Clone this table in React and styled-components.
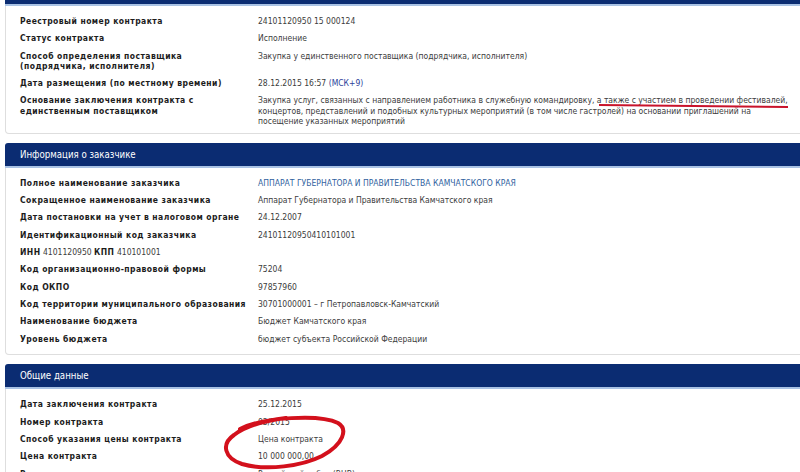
import styled, { createGlobalStyle } from "styled-components";

const GlobalStyle = createGlobalStyle`
  html, body {
    margin: 0;
    padding: 0;
    background: #fff;
    overflow: hidden;
  }
  body {
    font-family: "DejaVu Sans Condensed", "DejaVu Sans", Verdana, sans-serif;
    font-stretch: condensed;
    font-size: 8.5px;
    color: #333;
  }
`;

const Page = styled.div`
  position: relative;
  margin-top: -19px;
  padding-left: 5px;
  width: 815px;
`;

const Section = styled.section`
  margin-bottom: 9px;
`;

const SectionHeader = styled.div`
  height: 23px;
  background: #0b2c72;
  border-bottom: 2px solid #a9c2e4;
  border-radius: 3px 3px 0 0;
  color: #fff;
  font-size: 9.6px;
  display: flex;
  align-items: center;
  padding-left: 15px;
`;

const SectionBody = styled.div`
  border: 1px solid #dedede;
  border-top: none;
  border-radius: 0 0 4px 4px;
  padding: 6.5px 14px ${(p) => p.$pb || 5}px;
`;

const Row = styled.div`
  display: grid;
  grid-template-columns: 238px 1fr;
  padding: 3.5px 0;
  line-height: 10.3px;
  white-space: nowrap;
`;

const Label = styled.div`
  font-weight: bold;
  letter-spacing: 0.45px;
  color: #1c1c1c;
`;

const Value = styled.div`
  color: #3c3c3c;
`;

const Inline = styled.div`
  padding: 3.5px 0;
  line-height: 10.3px;
  color: #3c3c3c;

  b {
    color: #1c1c1c;
    letter-spacing: 0.45px;
  }
`;

const Link = styled.span`
  color: ${(p) => (p.$light ? "#2f5f9e" : "#2b3f9a")};
`;

const Underlined = styled.span`
  position: relative;

  &::after {
    content: "";
    position: absolute;
    left: 2px;
    right: 0;
    bottom: -2px;
    height: 2px;
    background: #c9132b;
    transform: rotate(0.6deg);
  }
`;

const Annotation = styled.svg`
  position: absolute;
  left: 222px;
  top: 433px;
  width: 124px;
  height: 58px;
  overflow: visible;
  pointer-events: none;
`;

const first = [
  ["Реестровый номер контракта", "24101120950 15 000124"],
  ["Статус контракта", "Исполнение"],
  [
    <>
      Способ определения поставщика
      <br />
      (подрядчика, исполнителя)
    </>,
    "Закупка у единственного поставщика (подрядчика, исполнителя)",
  ],
  [
    "Дата размещения (по местному времени)",
    <>
      28.12.2015 16:57 <Link>(МСК+9)</Link>
    </>,
  ],
  [
    <>
      Основание заключения контракта с
      <br />
      единственным поставщиком
    </>,
    <>
      Закупка услуг, связанных с направлением работника в служебную командировку,{" "}
      <Underlined>а также с участием в проведении фестивалей,</Underlined>
      <br />
      концертов, представлений и подобных культурных мероприятий (в том числе гастролей) на основании приглашений на
      <br />
      посещение указанных мероприятий
    </>,
  ],
];

const customerTop = [
  [
    "Полное наименование заказчика",
    <Link $light>АППАРАТ ГУБЕРНАТОРА И ПРАВИТЕЛЬСТВА КАМЧАТСКОГО КРАЯ</Link>,
  ],
  ["Сокращенное наименование заказчика", "Аппарат Губернатора и Правительства Камчатского края"],
  ["Дата постановки на учет в налоговом органе", "24.12.2007"],
  ["Идентификационный код заказчика", "24101120950410101001"],
];

const customerBottom = [
  ["Код организационно-правовой формы", "75204"],
  ["Код ОКПО", "97857960"],
  ["Код территории муниципального образования", "30701000001 – г Петропавловск-Камчатский"],
  ["Наименование бюджета", "Бюджет Камчатского края"],
  ["Уровень бюджета", "бюджет субъекта Российской Федерации"],
];

const general = [
  ["Дата заключения контракта", "25.12.2015"],
  ["Номер контракта", "03/2015"],
  ["Способ указания цены контракта", "Цена контракта"],
  ["Цена контракта", "10 000 000,00"],
  ["Валюта контракта", "Российский рубль (RUB)"],
];

function Rows({ items }) {
  return items.map(([label, value], i) => (
    <Row key={i}>
      <Label>{label}</Label>
      <Value>{value}</Value>
    </Row>
  ));
}

export default function App() {
  return (
    <>
      <GlobalStyle />
      <Page>
        <Section>
          <SectionHeader>Общая информация</SectionHeader>
          <SectionBody $pb={3}>
            <Rows items={first} />
          </SectionBody>
        </Section>
        <Section>
          <SectionHeader>Информация о заказчике</SectionHeader>
          <SectionBody $pb={7}>
            <Rows items={customerTop} />
            <Inline>
              <b>ИНН</b> 4101120950 <b>КПП</b> 410101001
            </Inline>
            <Rows items={customerBottom} />
          </SectionBody>
        </Section>
        <Section>
          <SectionHeader>Общие данные</SectionHeader>
          <SectionBody>
            <Rows items={general} />
          </SectionBody>
        </Section>
        <Annotation viewBox="0 0 124 58">
          <path
            d="M18 15 C 42 3, 98 0, 116 9 C 126 15, 122 30, 100 42 C 80 52, 45 57, 20 50 C 2 44, -1 30, 12 21 C 22 13, 40 7, 64 4"
            fill="none"
            stroke="#d3101c"
            strokeWidth="4"
            strokeLinecap="round"
          />
        </Annotation>
      </Page>
    </>
  );
}
